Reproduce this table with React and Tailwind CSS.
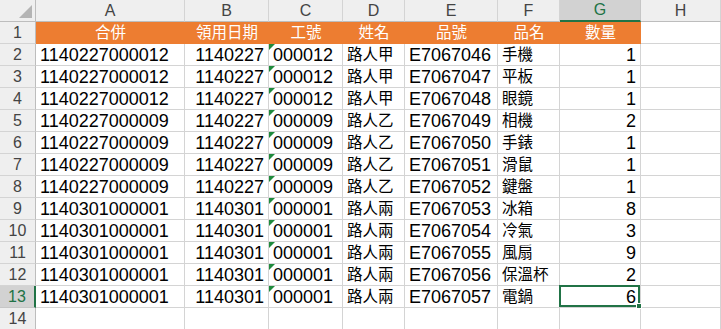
import React from 'react';

const letters = ['A', 'B', 'C', 'D', 'E', 'F', 'G', 'H'];
const head = ['合併', '領用日期', '工號', '姓名', '品號', '品名', '數量'];

const rows = [
  ['1140227000012', '1140227', '000012', '路人甲', 'E7067046', '手機', '1'],
  ['1140227000012', '1140227', '000012', '路人甲', 'E7067047', '平板', '1'],
  ['1140227000012', '1140227', '000012', '路人甲', 'E7067048', '眼鏡', '1'],
  ['1140227000009', '1140227', '000009', '路人乙', 'E7067049', '相機', '2'],
  ['1140227000009', '1140227', '000009', '路人乙', 'E7067050', '手錶', '1'],
  ['1140227000009', '1140227', '000009', '路人乙', 'E7067051', '滑鼠', '1'],
  ['1140227000009', '1140227', '000009', '路人乙', 'E7067052', '鍵盤', '1'],
  ['1140301000001', '1140301', '000001', '路人兩', 'E7067053', '冰箱', '8'],
  ['1140301000001', '1140301', '000001', '路人兩', 'E7067054', '冷氣', '3'],
  ['1140301000001', '1140301', '000001', '路人兩', 'E7067055', '風扇', '9'],
  ['1140301000001', '1140301', '000001', '路人兩', 'E7067056', '保溫杯', '2'],
  ['1140301000001', '1140301', '000001', '路人兩', 'E7067057', '電鍋', '6'],
];

// column alignment: B and G are numbers (right), the rest text
const rightCols = [1, 6];

function ColHeader({ label, selected }) {
  return (
    <div
      className={
        selected
          ? 'h-[22px] flex items-center justify-center bg-[#d2d2d2] text-[#217346] border-r border-[#c6c6c6] border-b-2 border-b-[#217346] text-[16px]'
          : 'h-[22px] flex items-center justify-center bg-[#efefef] text-[#444] border-r border-[#d4d4d4] border-b border-b-[#bdbdbd] text-[16px]'
      }
    >
      {label}
    </div>
  );
}

function RowHeader({ n, selected }) {
  return (
    <div
      className={
        selected
          ? 'h-[22px] flex items-center justify-center bg-[#d2d2d2] text-[#217346] border-b border-[#c6c6c6] border-r-2 border-r-[#217346] text-[16px]'
          : 'h-[22px] flex items-center justify-center bg-[#efefef] text-[#444] border-b border-[#d4d4d4] border-r border-r-[#bdbdbd] text-[16px]'
      }
    >
      {n}
    </div>
  );
}

function Cell({ value, col, selected }) {
  const isCjk = /[\u4e00-\u9fff]/.test(value);
  const right = rightCols.includes(col);
  return (
    <div
      className={`relative h-[22px] flex items-center border-r border-b border-[#d4d4d4] text-black ${
        right ? 'justify-end pr-[4px]' : 'justify-start pl-[4px]'
      } ${isCjk ? 'text-[15.5px]' : 'text-[18px]'}`}
    >
      {col === 2 && (
        <span className="absolute left-0 top-0 w-0 h-0 border-t-[6px] border-t-[#1f8a3c] border-r-[6px] border-r-transparent" />
      )}
      <span className="leading-none pt-[1px]">{value}</span>
      {selected && (
        <span className="absolute -left-[1px] -top-[1px] right-0 bottom-0 border-2 border-[#217346]">
          <span className="absolute -right-[4px] -bottom-[4px] w-[6px] h-[6px] bg-[#217346] border border-white" />
        </span>
      )}
    </div>
  );
}

export default function App() {
  return (
    <div className="w-[721px] h-[329px] overflow-hidden bg-white font-['Liberation_Sans','Noto_Sans_CJK_TC',sans-serif]">
      <div className="grid grid-cols-[36px_149px_84px_74px_62px_93px_62px_81px_80px]">
        {/* corner */}
        <div className="h-[22px] bg-[#efefef] border-r border-b border-[#bdbdbd] flex items-end justify-end pr-[3px] pb-[3px]">
          <svg width="13" height="13" viewBox="0 0 13 13">
            <polygon points="13,0 13,13 0,13" fill="#b4b4b4" />
          </svg>
        </div>
        {letters.map((l, i) => (
          <ColHeader key={l} label={l} selected={i === 6} />
        ))}

        {/* row 1 : orange header */}
        <RowHeader n={1} />
        {head.map((h) => (
          <div
            key={h}
            className="h-[22px] flex items-center justify-center bg-[#ed7d31] text-white text-[15.5px] border-b border-[#ed7d31]"
          >
            <span className="leading-none">{h}</span>
          </div>
        ))}
        <div className="h-[22px] border-r border-b border-[#d4d4d4]" />

        {rows.map((r, ri) => (
          <React.Fragment key={ri}>
            <RowHeader n={ri + 2} selected={ri === 11} />
            {r.map((v, ci) => (
              <Cell key={ci} value={v} col={ci} selected={ri === 11 && ci === 6} />
            ))}
            <div className="h-[22px] border-r border-b border-[#d4d4d4]" />
          </React.Fragment>
        ))}

        {/* row 14 : empty */}
        <RowHeader n={14} />
        {letters.map((l) => (
          <div key={l} className="h-[22px] border-r border-b border-[#d4d4d4]" />
        ))}
      </div>
    </div>
  );
}
